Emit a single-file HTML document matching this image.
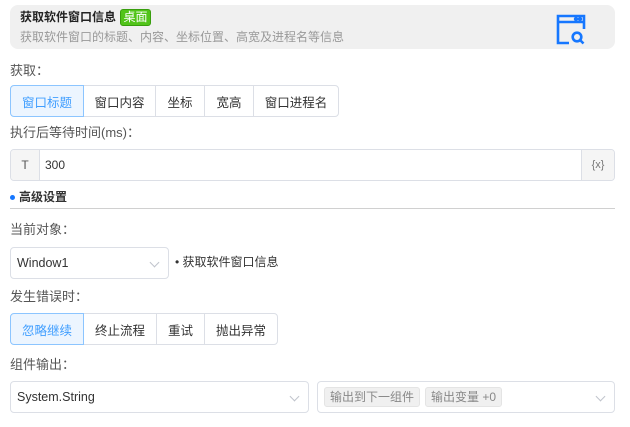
<!DOCTYPE html>
<html><head><meta charset="utf-8"><style>
*{box-sizing:border-box;margin:0;padding:0}
body{width:630px;height:427px;background:#fff;font-family:"Liberation Sans","Noto Sans CJK SC",sans-serif;font-size:12px;color:#333;position:relative;overflow:hidden}
.a{position:absolute}
.hdr{left:10px;top:5px;width:605px;height:44px;background:#f0f0f0;border-radius:8px}
.lbl{color:#555;font-size:13px;line-height:15px}
.grp{display:flex;height:32px}
.grp div{border:1px solid #dcdfe6;margin-left:-1px;display:flex;align-items:center;justify-content:center;font-size:12.5px;color:#333;background:#fff}
.grp div:first-child{margin-left:0;border-radius:4px 0 0 4px}
.grp div:last-child{border-radius:0 4px 4px 0}
.grp div.on{background:#ecf5ff;border-color:#8cc5ff;color:#409eff;position:relative;z-index:1}
.sel{border:1px solid #dcdfe6;border-radius:4px;height:32px;display:flex;align-items:center;padding-left:6px;color:#333;font-size:12.5px}
.chev{position:absolute;right:10px;top:11px;width:7px;height:7px;border-right:1px solid #c0c4cc;border-bottom:1px solid #c0c4cc;transform:rotate(45deg)}
.tag{background:#f0f0f0;border:1px solid #e4e4e4;border-radius:3px;color:#888;padding:0 5px;height:20px;line-height:18px;margin-right:5px;font-size:12px}
</style></head><body>
<div class="a hdr"></div>
<div class="a" style="left:20px;top:10px;font-weight:bold;font-size:12px;line-height:14px;color:#222">获取软件窗口信息</div>
<div class="a" style="left:120px;top:9px;width:31px;height:17px;background:#52c41a;border-radius:3px;color:#fff;font-size:12px;line-height:15px;text-align:center;border:1px solid #389e0d">桌面</div>
<div class="a" style="left:20px;top:30px;color:#999;font-size:12px;line-height:14px">获取软件窗口的标题、内容、坐标位置、高宽及进程名等信息</div>
<svg class="a" style="left:555px;top:14px" width="34" height="32" viewBox="0 0 34 32" fill="none" stroke="#1677ff" stroke-width="2.6">
<path d="M14 29H3V2h26v13"/><path d="M3 8h26"/><circle cx="21" cy="5" r="0.9" fill="#1677ff"/><circle cx="25" cy="5" r="0.9" fill="#1677ff"/>
<circle cx="22" cy="23" r="4.3"/><path d="M25 26l3.5 3.5"/></svg>
<div class="a lbl" style="left:10px;top:63px">获取：</div>
<div class="a grp" style="left:10px;top:85px">
<div class="on" style="width:74px">窗口标题</div><div style="width:73px">窗口内容</div><div style="width:50px">坐标</div><div style="width:50px">宽高</div><div style="width:86px">窗口进程名</div></div>
<div class="a lbl" style="left:10px;top:125px">执行后等待时间(ms)：</div>
<div class="a" style="left:10px;top:149px;width:605px;height:32px;border:1px solid #dcdfe6;border-radius:4px;overflow:hidden">
<div class="a" style="left:0;top:0;width:29px;height:30px;background:#f5f5f5;border-right:1px solid #dcdfe6;text-align:center;line-height:30px;color:#555">T</div>
<div class="a" style="left:34px;top:0;line-height:30px">300</div>
<div class="a" style="right:0;top:0;width:33px;height:30px;background:#f5f5f5;border-left:1px solid #dcdfe6;text-align:center;line-height:30px;color:#777;font-size:11px">{x}</div></div>
<div class="a" style="left:10px;top:195px;width:5px;height:5px;border-radius:50%;background:#1677ff"></div>
<div class="a" style="left:19px;top:190px;font-weight:bold;line-height:14px">高级设置</div>
<div class="a" style="left:10px;top:208px;width:605px;height:1px;background:#d0d0d0"></div>
<div class="a lbl" style="left:10px;top:222px">当前对象：</div>
<div class="a sel" style="left:10px;top:247px;width:159px">Window1<span class="chev"></span></div>
<div class="a" style="left:175px;top:255px;line-height:14px;color:#333">• 获取软件窗口信息</div>
<div class="a lbl" style="left:10px;top:289px">发生错误时：</div>
<div class="a grp" style="left:10px;top:313px">
<div class="on" style="width:74px">忽略继续</div><div style="width:74px">终止流程</div><div style="width:49px">重试</div><div style="width:74px">抛出异常</div></div>
<div class="a lbl" style="left:10px;top:357px">组件输出：</div>
<div class="a sel" style="left:10px;top:381px;width:299px">System.String<span class="chev"></span></div>
<div class="a sel" style="left:317px;top:381px;width:298px;padding-left:6px"><span class="tag">输出到下一组件</span><span class="tag">输出变量 +0</span><span class="chev"></span></div>
</body></html>
